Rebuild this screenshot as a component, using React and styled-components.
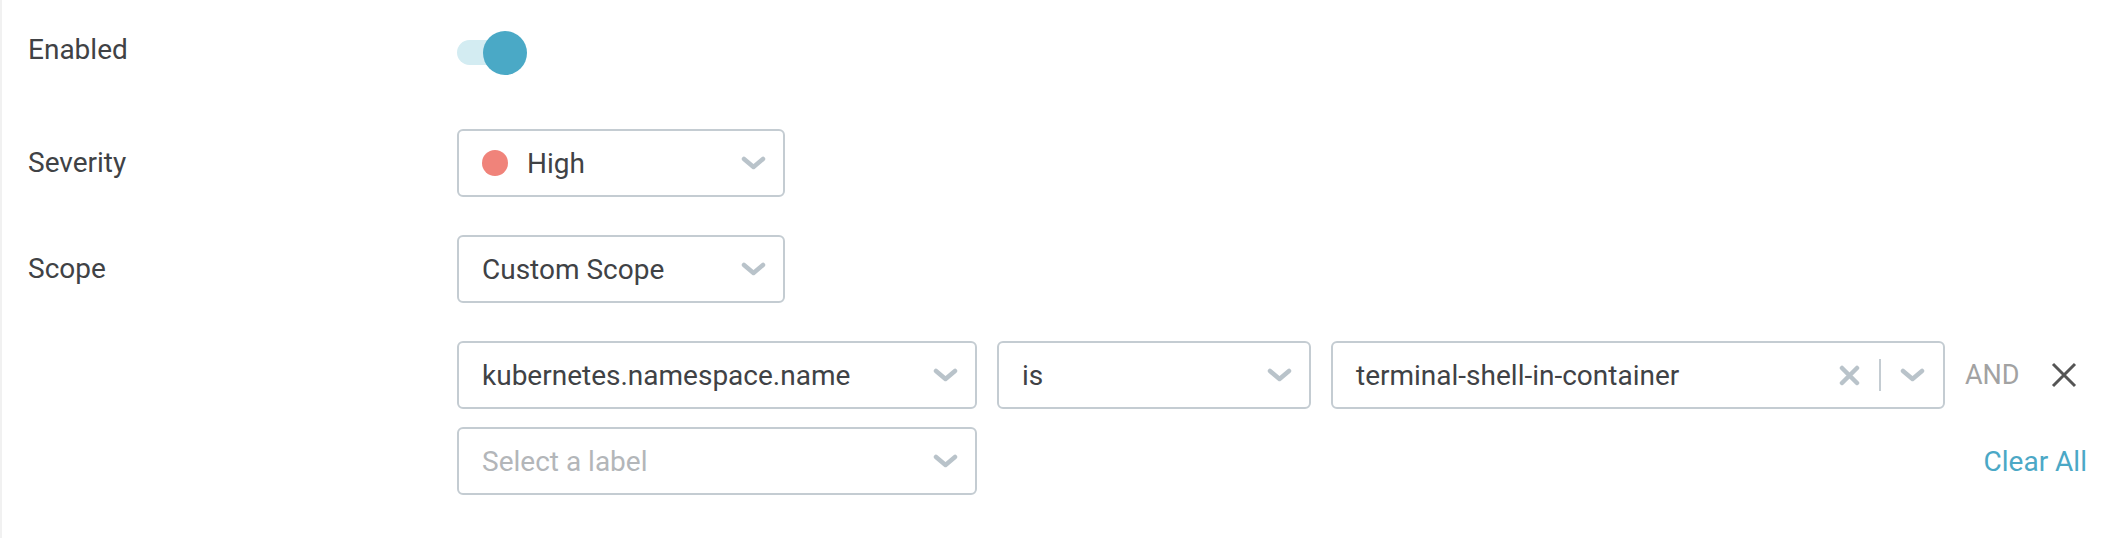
import React from "react";
import styled, { createGlobalStyle } from "styled-components";

const GlobalStyle = createGlobalStyle`
  html, body {
    margin: 0;
    padding: 0;
    background: #fff;
  }
  body {
    font-family: Roboto, "Liberation Sans", Arial, sans-serif;
  }
`;

const Page = styled.div`
  box-sizing: border-box;
  width: 2122px;
  height: 538px;
  padding: 16px 35px 0 26px;
  border-left: 2px solid #f1f1f1;
`;

const Field = styled.div`
  display: grid;
  grid-template-columns: 429px 1fr;
  align-items: ${(props) => (props.top ? "start" : "center")};
  margin-bottom: ${(props) => props.gap || 0}px;
  min-height: 68px;
`;

const Label = styled.div`
  font-size: 28px;
  line-height: 68px;
  color: #404245;
`;

const Stack = styled.div`
  display: flex;
  flex-direction: column;
`;

const Row = styled.div`
  display: flex;
  align-items: center;
  margin-top: ${(props) => props.mt || 0}px;
`;

const ToggleTrack = styled.div`
  position: relative;
  width: 62px;
  height: 25px;
  margin-top: 4px;
  border-radius: 13px;
  background: #d3ecf2;
`;

const ToggleThumb = styled.div`
  position: absolute;
  top: -9px;
  left: 26px;
  width: 44px;
  height: 44px;
  border-radius: 50%;
  background: #4aa9c6;
`;

const Select = styled.div`
  box-sizing: border-box;
  display: flex;
  align-items: center;
  width: ${(props) => props.width}px;
  height: 68px;
  padding: 0 17px 0 23px;
  border: 2px solid #c4ccd2;
  border-radius: 6px;
  background: #fff;
  margin-left: ${(props) => props.ml || 0}px;
`;

const Value = styled.span`
  flex: 1;
  font-size: 28px;
  color: ${(props) => (props.placeholder ? "#b3b6b9" : "#404245")};
  white-space: nowrap;
`;

const Dot = styled.span`
  width: 26px;
  height: 26px;
  border-radius: 50%;
  background: #f0837a;
  margin-right: 19px;
  flex-shrink: 0;
`;

const Divider = styled.span`
  width: 2px;
  height: 32px;
  background: #c4ccd2;
  margin: 0 18px 0 19px;
`;

const Conj = styled.span`
  font-size: 27px;
  color: #a2a2a2;
  margin-left: 20px;
`;

const RemoveButton = styled.button`
  display: flex;
  padding: 0;
  margin-left: 31px;
  border: none;
  background: none;
`;

const ClearAll = styled.button`
  margin-left: auto;
  padding: 0;
  border: none;
  background: none;
  font-family: inherit;
  font-size: 28px;
  color: #4ba8c6;
`;

const Chevron = ({ w = 25 }) => (
  <svg width={w} height="14" viewBox="0 0 25 14">
    <polyline
      points="3,3 12.5,11 22,3"
      fill="none"
      stroke="#b9c3ca"
      strokeWidth="4.5"
      strokeLinecap="round"
      strokeLinejoin="round"
    />
  </svg>
);

const ClearIcon = () => (
  <svg width="21" height="21" viewBox="0 0 21 21">
    <path
      d="M3 3 L18 18 M18 3 L3 18"
      stroke="#b9c3ca"
      strokeWidth="4.5"
      strokeLinecap="round"
    />
  </svg>
);

const CloseIcon = () => (
  <svg width="26" height="26" viewBox="0 0 26 26">
    <path d="M2 2 L24 24 M24 2 L2 24" stroke="#555" strokeWidth="3" />
  </svg>
);

const App = () => {
  return (
    <>
      <GlobalStyle />
      <Page>
        <Field gap={45}>
          <Label>Enabled</Label>
          <div>
            <ToggleTrack>
              <ToggleThumb />
            </ToggleTrack>
          </div>
        </Field>

        <Field gap={38}>
          <Label>Severity</Label>
          <div>
            <Select width={328}>
              <Dot />
              <Value>High</Value>
              <Chevron />
            </Select>
          </div>
        </Field>

        <Field top>
          <Label>Scope</Label>
          <Stack>
            <Row>
              <Select width={328}>
                <Value>Custom Scope</Value>
                <Chevron />
              </Select>
            </Row>
            <Row mt={38}>
              <Select width={520}>
                <Value>kubernetes.namespace.name</Value>
                <Chevron />
              </Select>
              <Select width={314} ml={20}>
                <Value>is</Value>
                <Chevron />
              </Select>
              <Select width={614} ml={20}>
                <Value>terminal-shell-in-container</Value>
                <ClearIcon />
                <Divider />
                <Chevron w={27} />
              </Select>
              <Conj>AND</Conj>
              <RemoveButton>
                <CloseIcon />
              </RemoveButton>
            </Row>
            <Row mt={18}>
              <Select width={520}>
                <Value placeholder>Select a label</Value>
                <Chevron />
              </Select>
              <ClearAll>Clear All</ClearAll>
            </Row>
          </Stack>
        </Field>
      </Page>
    </>
  );
};

export default App;
